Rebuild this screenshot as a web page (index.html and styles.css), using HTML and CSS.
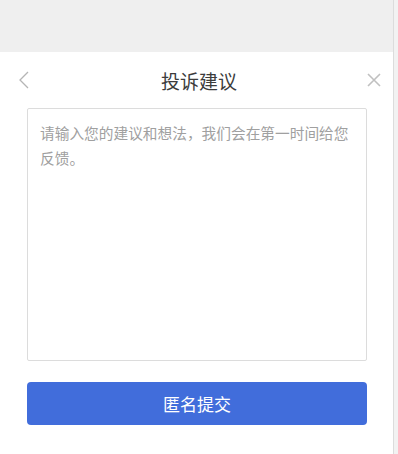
FILE: index.html
```html
<!DOCTYPE html>
<html lang="zh-CN">
<head>
    <meta charset="UTF-8">
    <meta name="viewport" content="width=device-width, initial-scale=1.0">
    <title>投诉建议</title>
    <link rel="stylesheet" href="styles.css">
</head>
<body>
    <div class="page">
        <div class="main">
            <div class="top-band"></div>

            <div class="panel">
                <!-- Header -->
                <div class="header">
                    <span class="back">
                        <svg width="12" height="20" viewBox="0 0 12 20">
                            <path d="M10 2 L2 10 L10 18" fill="none" stroke="#b5b5b5" stroke-width="1.3"/>
                        </svg>
                    </span>
                    <h3>投诉建议</h3>
                    <span class="close">
                        <svg width="14" height="14" viewBox="0 0 14 14">
                            <path d="M1 1 L13 13 M13 1 L1 13" fill="none" stroke="#c0c0c0" stroke-width="1.6"/>
                        </svg>
                    </span>
                </div>

                <!-- Feedback -->
                <div class="feedback">
                    <textarea placeholder="请输入您的建议和想法，我们会在第一时间给您反馈。"></textarea>
                </div>

                <button class="submit">匿名提交</button>
            </div>
        </div>
        <div class="scroll-edge"></div>
    </div>
</body>
</html>
```

FILE: styles.css
```css
/* styles.css */

body, html {
    margin: 0;
    padding: 0;
    height: 100%;
    font-family: "Noto Sans CJK SC", "Noto Sans", sans-serif;
    background-color: #efefef;
}

.page {
    display: flex;
    height: 100vh;
}

.main {
    flex: 1;
    display: flex;
    flex-direction: column;
}

.top-band {
    height: 52px;
    background-color: #efefef;
}

.panel {
    flex: 1;
    background-color: #ffffff;
    padding: 0 26px 0 27px;
}

.scroll-edge {
    width: 4px;
    border-left: 1px solid #dcdcdc;
    background-color: #f2f2f2;
}

.header {
    display: flex;
    align-items: center;
    justify-content: space-between;
    height: 56px;
    margin: 0 -14px 0 -10px;
}

.header h3 {
    margin: 0;
    font-size: 19px;
    font-weight: normal;
    color: #3c3c3c;
}

.header .back,
.header .close {
    display: flex;
    width: 14px;
    justify-content: center;
}

.feedback textarea {
    display: block;
    box-sizing: border-box;
    width: 100%;
    height: 253px;
    padding: 11px 12px;
    border: 1px solid #dcdcdc;
    border-radius: 2px;
    resize: none;
    font-family: inherit;
    font-size: 14.7px;
    line-height: 25px;
    color: #333;
    outline: none;
}

.feedback textarea::placeholder {
    color: #a0a0a0;
}

.submit {
    display: block;
    width: 100%;
    height: 43px;
    margin-top: 21px;
    border: none;
    border-radius: 4px;
    background-color: #416ddb;
    color: #fff;
    font-family: inherit;
    font-size: 17px;
    cursor: pointer;
}
```
